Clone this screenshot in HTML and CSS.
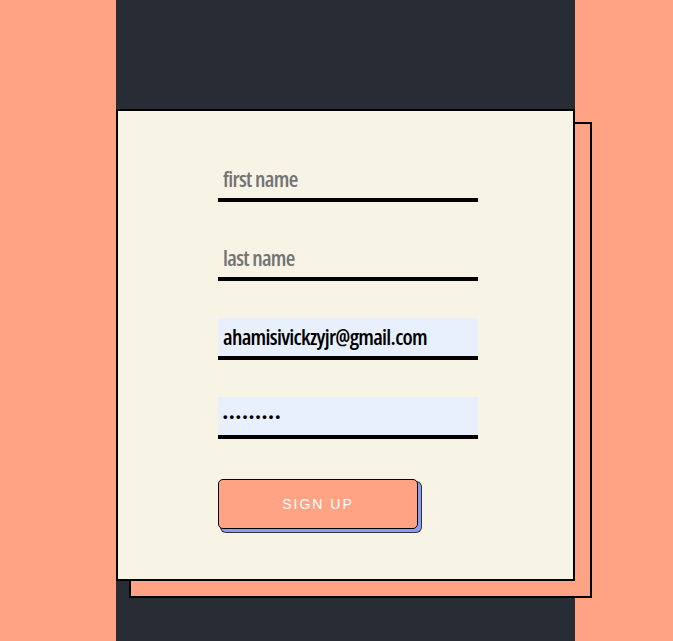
FILE: index.html
```html
<!DOCTYPE html>
<html lang="en">
<head>
  <meta charset="UTF-8" />
  <meta name="viewport" content="width=device-width, initial-scale=1.0"/>
  <title>Sign Up</title>
  <link rel="stylesheet" href="styles.css">
</head>
<body>
  <div class="page">
    <!-- Sign up card -->
    <form class="card" novalidate>
      <input type="text" class="field" placeholder="first name">
      <input type="text" class="field" placeholder="last name">
      <input type="email" class="field filled" placeholder="email" value="ahamisivickzyjr@gmail.com">
      <input type="password" class="field filled" placeholder="password" value="123456789">
      <button type="submit" class="btn">SIGN UP</button>
    </form>
  </div>
</body>
</html>
```

FILE: styles.css
```css
* {
  box-sizing: border-box;
}

body {
  margin: 0;
  background: #ffa384;
  min-height: 100vh;
}

.page {
  position: relative;
  z-index: 0;
  width: 459px;
  min-height: 100vh;
  margin-left: 116px;
  padding-top: 109px;
  background: #282c34;
}

.card {
  position: relative;
  display: flex;
  flex-direction: column;
  align-items: flex-start;
  gap: 37px;
  padding: 49px 0 50px 100px;
  background: #f7f4e6;
  border: 2px solid #000;
}

.card::before {
  content: "";
  position: absolute;
  top: 11px;
  left: 11px;
  right: -19px;
  bottom: -19px;
  z-index: -1;
  background: #ffa384;
  border: 2px solid #000;
}

.field {
  width: 260px;
  height: 42px;
  padding: 0 5px 3px;
  border: none;
  border-bottom: 4px solid #000;
  background: transparent;
  font-family: "Open Sans", "DejaVu Sans Condensed", sans-serif;
  font-stretch: 75%;
  font-weight: 600;
  font-size: 22px;
  letter-spacing: -0.7px;
  color: #000;
  outline: none;
}

.field::placeholder {
  color: #747474;
}

.field.filled {
  background: #e8f0fe;
}

.field[type="password"] {
  padding-bottom: 0;
  font-family: "Liberation Sans", sans-serif;
  font-size: 13px;
  letter-spacing: 2px;
}

.btn {
  margin-top: 3px;
  width: 200px;
  height: 50px;
  background: #ffa384;
  color: #fff;
  border: 1px solid #000;
  border-radius: 5px;
  box-shadow: 3px 3px 0 #8c9bf6, 3px 3px 0 1px #333;
  font-family: "Liberation Sans", Arial, sans-serif;
  font-size: 14px;
  letter-spacing: 2px;
  cursor: pointer;
}
```
